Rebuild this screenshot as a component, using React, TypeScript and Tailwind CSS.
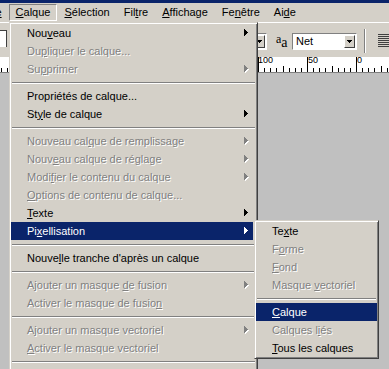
import clsx from 'clsx';

type Entry = { label: string; disabled?: boolean; sub?: boolean; active?: boolean } | 'sep';

const mainItems: Entry[] = [
  { label: 'Nou&veau', sub: true },
  { label: 'Du&pliquer le calque...', disabled: true },
  { label: 'Su&pprimer', disabled: true, sub: true },
  'sep',
  { label: 'Propriétés de calque...' },
  { label: 'St&yle de calque', sub: true },
  'sep',
  { label: 'Nouveau cal&que de remplissage', disabled: true, sub: true },
  { label: 'Nouv&eau calque de réglage', disabled: true, sub: true },
  { label: 'Modi&fier le contenu du calque', disabled: true, sub: true },
  { label: '&Options de contenu de calque...', disabled: true },
  { label: '&Texte', sub: true },
  { label: 'Pi&xellisation', sub: true, active: true },
  'sep',
  { label: "Nouve&lle tranche d'après un calque" },
  'sep',
  { label: 'Ajouter un masque &de fusion', disabled: true, sub: true },
  { label: 'Activer le masque de fusio&n', disabled: true },
  'sep',
  { label: 'A&jouter un masque vectoriel', disabled: true, sub: true },
  { label: '&Activer le masque vectoriel', disabled: true },
  'sep',
];

const subItems: Entry[] = [
  { label: 'Te&xte' },
  { label: 'F&orme', disabled: true },
  { label: '&Fond', disabled: true },
  { label: 'Masque &vectoriel', disabled: true },
  'sep',
  { label: '&Calque', active: true },
  { label: 'Calques l&iés', disabled: true },
  { label: '&Tous les calques' },
];

const menuBar = ['Imag&e', '&Calque', '&Sélection', 'Fil&tre', '&Affichage', 'Fe&nêtre', 'Ai&de'];

// text with the mnemonic letter (after &) underlined
const Label = ({ text }: { text: string }) => {
  const i = text.indexOf('&');
  if (i < 0) return <>{text}</>;
  return (
    <>
      {text.slice(0, i)}
      <u>{text[i + 1]}</u>
      {text.slice(i + 2)}
    </>
  );
};

const arrowPath = 'M0 0h1v7H0z M1 1h1v5H1z M2 2h1v3H2z M3 3h1v1H3z';

const Arrow = ({ disabled, active }: { disabled?: boolean; active?: boolean }) => (
  <svg width="5" height="8" viewBox="0 0 5 8" shapeRendering="crispEdges" className="shrink-0">
    {disabled && <path d={arrowPath} fill="#ffffff" transform="translate(1 1)" />}
    <path d={arrowPath} fill={active ? '#ffffff' : disabled ? '#808080' : '#000000'} />
  </svg>
);

const Menu = ({ items, itemClass }: { items: Entry[]; itemClass?: string }) => (
  <div className="flex flex-col">
    {items.map((it, idx) =>
      it === 'sep' ? (
        <div key={idx} className="flex h-[9px] items-center px-[1px]">
          <div className="h-0 w-full border-t border-b border-t-[#808080] border-b-white" />
        </div>
      ) : (
        <div
          key={idx}
          className={clsx(
            'flex h-[18px] items-center pl-[16px] pr-[3px]',
            itemClass,
            it.active
              ? 'bg-[#0a246a] text-white'
              : it.disabled
                ? 'text-[#808080] [text-shadow:1px_1px_0_#ffffff]'
                : 'text-black'
          )}
        >
          <span className="flex-1 whitespace-nowrap">
            <Label text={it.label} />
          </span>
          {it.sub && <Arrow disabled={it.disabled} active={it.active} />}
        </div>
      )
    )}
  </div>
);

const Ruler = () => {
  const step = 49 / 8;
  const ticks: number[] = [];
  for (let k = -64; k <= 8; k++) ticks.push(k);
  return (
    <div className="relative h-[16px] border-b border-[#808080] bg-white">
      <svg width="389" height="16" className="absolute left-0 top-0" shapeRendering="crispEdges">
        {ticks.map((k) => {
          const x = Math.round(356 + k * step) + 0.5;
          const len = k % 8 === 0 ? 15 : k % 4 === 0 ? 6 : 4;
          return <line key={k} x1={x} x2={x} y1={15 - len} y2={15} stroke="#000" strokeWidth="1" />;
        })}
      </svg>
      <span className="absolute left-[258px] top-[-1px] text-[9px] leading-none">100</span>
      <span className="absolute left-[308px] top-[-1px] text-[9px] leading-none">50</span>
      <span className="absolute left-[357px] top-[-1px] text-[9px] leading-none">0</span>
    </div>
  );
};

export default function App() {
  return (
    <div className="relative flex h-[369px] w-[389px] flex-col overflow-hidden bg-[#c0c0c0] font-['Liberation_Sans',Arial,sans-serif] text-[11px] text-black">
      {/* title bar edge */}
      <div className="h-[3px] bg-[#0a246a]" />

      {/* menu bar */}
      <div className="flex h-[19px] items-center bg-[#d4d0c8]">
        {menuBar.map((m, i) => (
          <div
            key={m}
            className={clsx(
              'flex h-[17px] items-center border px-[6px] whitespace-nowrap',
              i === 0 && 'ml-[-36px]',
              m === '&Calque'
                ? 'border-t-[#808080] border-l-[#808080] border-r-white border-b-white'
                : 'border-transparent'
            )}
          >
            <Label text={m} />
          </div>
        ))}
      </div>

      {/* options toolbar */}
      <div className="flex h-[35px] items-center border-t border-white bg-[#d4d0c8]">
        <div className="mt-[-4px] h-[17px] w-[7px] border-t border-r border-t-[#404040] border-r-[#404040] bg-white" />
        <div className="flex-1" />
        <div className="mt-[2px] flex h-[17px] w-[60px] items-center justify-end border border-t-[#808080] border-l-[#808080] border-r-white border-b-white bg-white pr-[1px]">
          <div className="flex h-[13px] w-[11px] items-center justify-center border border-t-white border-l-white border-r-[#404040] border-b-[#404040] bg-[#d4d0c8]">
            <svg width="5" height="3" viewBox="0 0 5 3" shapeRendering="crispEdges">
              <path d="M0 0h5v1H0z M1 1h3v1H1z M2 2h1v1H2z" fill="#000" />
            </svg>
          </div>
        </div>
        <div className="ml-[9px] mt-[2px] flex w-[16px] items-end font-['Liberation_Serif',serif] leading-none">
          <span className="mb-[5px] text-[12px]">a</span>
          <span className="text-[14px]">a</span>
        </div>
        <div className="ml-[0px] mt-[2px] flex h-[17px] w-[65px] items-center border border-t-[#808080] border-l-[#808080] border-r-white border-b-white bg-white pl-[3px] pr-[1px]">
          <span className="flex-1">Net</span>
          <div className="flex h-[13px] w-[11px] items-center justify-center border border-t-white border-l-white border-r-[#404040] border-b-[#404040] bg-[#d4d0c8]">
            <svg width="5" height="3" viewBox="0 0 5 3" shapeRendering="crispEdges">
              <path d="M0 0h5v1H0z M1 1h3v1H1z M2 2h1v1H2z" fill="#000" />
            </svg>
          </div>
        </div>
        <div className="ml-[7px] mt-[2px] h-[24px] w-[2px] border-l border-r border-l-[#808080] border-r-white" />
        <svg width="11" height="14" className="ml-[12px] mt-[2px]" shapeRendering="crispEdges">
          {[0, 2, 4, 6, 8, 10, 12].map((y) => (
            <rect key={y} x="0" y={y} width="11" height="1" fill="#404040" />
          ))}
        </svg>
      </div>

      <Ruler />

      {/* canvas area */}
      <div className="flex-1 bg-[#c0c0c0]" />

      {/* Calque dropdown */}
      <div className="absolute left-[9px] top-[22px] h-[360px] w-[249px] border border-t-[#d4d0c8] border-l-[#d4d0c8] border-r-[#404040] border-b-[#404040] bg-[#d4d0c8] p-[1px] shadow-[inset_1px_1px_0_#ffffff,inset_-1px_-1px_0_#808080]">
        <Menu items={mainItems} itemClass="mr-[3px] pr-[4px]" />
      </div>

      {/* Pixellisation submenu */}
      <div className="absolute left-[254px] top-[220px] w-[125px] border border-t-[#d4d0c8] border-l-[#d4d0c8] border-r-[#404040] border-b-[#404040] bg-[#d4d0c8] p-[1px] shadow-[inset_1px_1px_0_#ffffff,inset_-1px_-1px_0_#808080]">
        <Menu items={subItems} />
      </div>
    </div>
  );
}
